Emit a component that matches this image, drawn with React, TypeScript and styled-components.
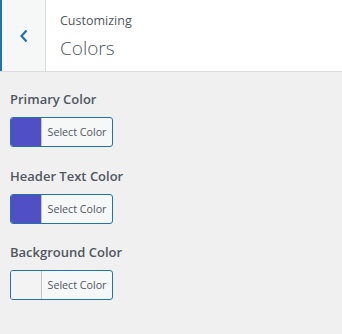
import React from "react";
import styled, { createGlobalStyle } from "styled-components";

const Global = createGlobalStyle`
  html, body { margin: 0; padding: 0; }
  body {
    background: #f0f0f1;
    font-family: "Open Sans", "Noto Sans", sans-serif;
    color: #50575e;
    width: 342px;
    height: 334px;
    overflow: hidden;
  }
`;

const Header = styled.div`
  display: flex;
  height: 71px;
  background: #fff;
  border-bottom: 1px solid #dcdcde;
`;

const BackButton = styled.button`
  width: 46px;
  flex: 0 0 46px;
  box-sizing: border-box;
  border: none;
  border-left: 2px solid #2271b1;
  border-right: 1px solid #dcdcde;
  background: #f6f7f7;
  padding: 0;
  display: flex;
  align-items: center;
  justify-content: center;
  color: #2271b1;
  cursor: pointer;
`;

const TitleBlock = styled.div`
  display: flex;
  flex-direction: column;
  padding: 11px 0 0 14px;
`;

const Crumb = styled.span`
  font-size: 12.5px;
  line-height: 20px;
  color: #50575e;
`;

const Title = styled.h1`
  margin: 3px 0 0 0;
  font-size: 19px;
  line-height: 28px;
  font-weight: 300;
  color: #50575e;
`;

const Body = styled.div`
  padding: 17px 10px 0 10px;
  display: flex;
  flex-direction: column;
  gap: 18.5px;
`;

const Control = styled.div`
  display: flex;
  flex-direction: column;
  align-items: flex-start;
  gap: 8px;
`;

const Label = styled.span`
  font-size: 13px;
  line-height: 20px;
  font-weight: 600;
  color: #50575e;
`;

const ColorButton = styled.button`
  display: flex;
  align-items: stretch;
  height: 30px;
  width: 103px;
  box-sizing: border-box;
  padding: 0;
  border: 1px solid #2271b1;
  border-radius: 3px;
  background: #f6f7f7;
  overflow: hidden;
  cursor: pointer;
  font-family: inherit;
`;

const Swatch = styled.span<{ $color: string }>`
  width: 30px;
  flex: 0 0 30px;
  background: ${(p) => p.$color};
`;

const ButtonText = styled.span`
  flex: 1;
  display: flex;
  align-items: center;
  justify-content: center;
  font-size: 10.7px;
  color: #50575e;
  border-left: 1px solid #c3c4c7;
`;

const controls = [
  { label: "Primary Color", color: "#5050c4" },
  { label: "Header Text Color", color: "#5050c4" },
  { label: "Background Color", color: "#f3f3f3" },
];

export default function App() {
  return (
    <>
      <Global />
      <Header>
        <BackButton aria-label="Back">
          <svg width="10" height="14" viewBox="0 0 10 14">
            <path d="M7.5 1.5 L2.5 7 L7.5 12.5" fill="none" stroke="#2271b1" strokeWidth="2.2" />
          </svg>
        </BackButton>
        <TitleBlock>
          <Crumb>Customizing</Crumb>
          <Title>Colors</Title>
        </TitleBlock>
      </Header>
      <Body>
        {controls.map((c) => (
          <Control key={c.label}>
            <Label>{c.label}</Label>
            <ColorButton>
              <Swatch $color={c.color} />
              <ButtonText>Select Color</ButtonText>
            </ColorButton>
          </Control>
        ))}
      </Body>
    </>
  );
}
